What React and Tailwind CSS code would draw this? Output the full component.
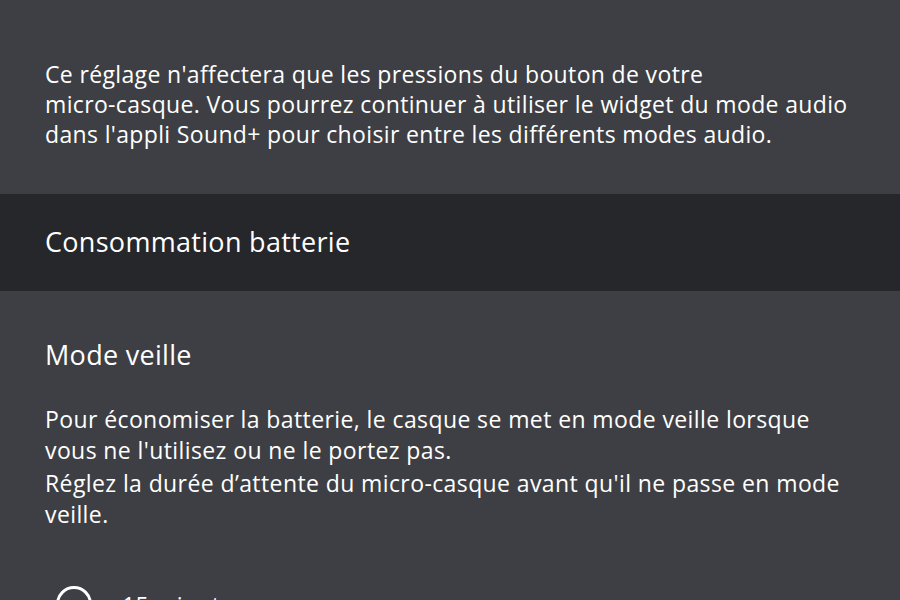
export default function App() {
  return (
    <div
      className="w-[900px] h-[600px] overflow-hidden bg-[#3e3f44] text-white"
      style={{ fontFamily: '"Open Sans", "Noto Sans", sans-serif' }}
    >
      {/* Description */}
      <div className="px-[45px] pt-[59px] pb-[45px] text-[23px] leading-[30px] tracking-[0.35px]">
        <p className="whitespace-nowrap">Ce réglage n'affectera que les pressions du bouton de votre</p>
        <p className="whitespace-nowrap">micro-casque. Vous pourrez continuer à utiliser le widget du mode audio</p>
        <p className="whitespace-nowrap">dans l'appli Sound+ pour choisir entre les différents modes audio.</p>
      </div>

      {/* Section header */}
      <div className="bg-[#26272a] h-[97px] flex items-center px-[45px]">
        <h2 className="text-[27px] tracking-[0.3px]">Consommation batterie</h2>
      </div>

      {/* Sleep mode */}
      <div className="px-[45px] pt-[47px]">
        <h3 className="text-[27px] leading-[34px] tracking-[0.3px]">Mode veille</h3>
        <div className="mt-[32px] text-[23px] leading-[31px] tracking-[0.4px]">
          <p className="whitespace-nowrap">Pour économiser la batterie, le casque se met en mode veille lorsque</p>
          <p className="whitespace-nowrap">vous ne l'utilisez ou ne le portez pas.</p>
          <p className="whitespace-nowrap mt-[2px]">Réglez la durée d’attente du micro-casque avant qu'il ne passe en mode</p>
          <p className="whitespace-nowrap">veille.</p>
        </div>

        <div className="mt-[56px] flex items-start gap-[30px] pl-[11px]">
          <span className="w-[36px] h-[36px] rounded-full border-[3px] border-white shrink-0" />
          <span className="text-[23px] leading-[30px] mt-[4px] tracking-[0.3px]">15 minutes</span>
        </div>
      </div>
    </div>
  );
}
